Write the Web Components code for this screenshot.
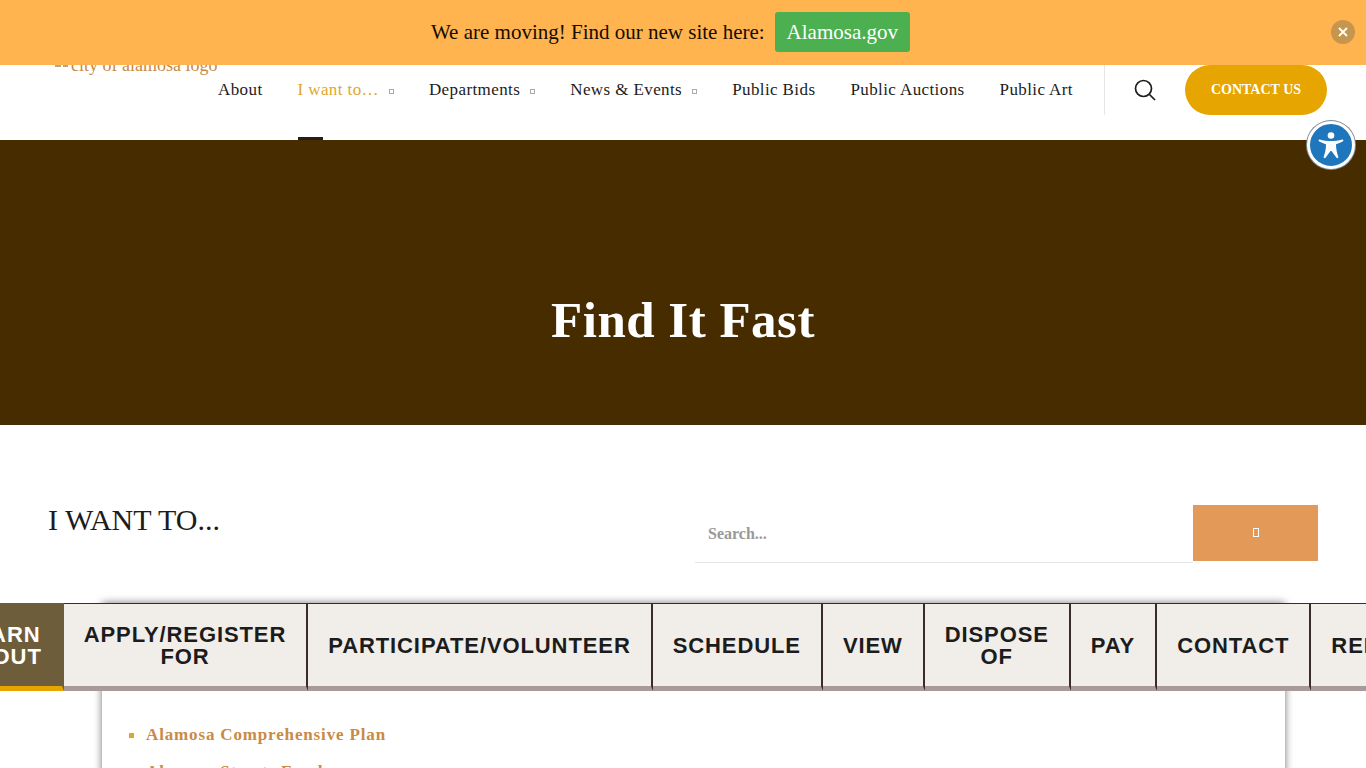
<!DOCTYPE html>
<html lang="en">
<head>
<meta charset="utf-8">
<title>Find It Fast</title>
<style>
  html, body { margin: 0; height: 768px; overflow: hidden; background: #fff; }
  body { font-family: "Liberation Serif", "Times New Roman", serif; color: #1c1c1c; position: relative; }
</style>
</head>
<body>
<site-banner></site-banner>
<site-header>
  <nav-link>About</nav-link>
  <nav-link active caret>I want to…</nav-link>
  <nav-link caret>Departments</nav-link>
  <nav-link caret>News &amp; Events</nav-link>
  <nav-link>Public Bids</nav-link>
  <nav-link>Public Auctions</nav-link>
  <nav-link>Public Art</nav-link>
</site-header>
<a11y-button></a11y-button>
<hero-band>Find It Fast</hero-band>
<want-section>
  <tab-item active>LEARN ABOUT</tab-item>
  <tab-item>APPLY/REGISTER FOR</tab-item>
  <tab-item>PARTICIPATE/VOLUNTEER</tab-item>
  <tab-item>SCHEDULE</tab-item>
  <tab-item>VIEW</tab-item>
  <tab-item>DISPOSE OF</tab-item>
  <tab-item>PAY</tab-item>
  <tab-item>CONTACT</tab-item>
  <tab-item>REPORT</tab-item>
  <li slot="links">Alamosa Comprehensive Plan</li>
  <li slot="links">Alamosa Streets Fund</li>
</want-section>

<script>
  class SiteBanner extends HTMLElement {
    constructor() {
      super();
      this.attachShadow({ mode: 'open' });
      this.shadowRoot.innerHTML = `
        <style>
          :host {
            position: absolute; top: 0; left: 0; right: 0; z-index: 5;
            display: flex; align-items: center; justify-content: center;
            gap: 10px; height: 65px; padding-right: 25px; box-sizing: border-box;
            background: #ffb44f; color: #140d00; font-size: 21px;
          }
          a {
            display: block; background: #4caf50; color: #fff; border-radius: 3px;
            padding: 0 12px; line-height: 40px; height: 40px; margin-top: -1px;
          }
          .close {
            position: absolute; right: 11px; top: 20px; width: 24px; height: 24px;
            border-radius: 50%; background: #c6964f;
            display: flex; align-items: center; justify-content: center;
          }
        </style>
        <span>We are moving! Find our new site here:</span>
        <a>Alamosa.gov</a>
        <div class="close">
          <svg width="12" height="12" viewBox="0 0 12 12"><path d="M2 2l8 8M10 2l-8 8" stroke="#fff" stroke-width="1.8" fill="none"/></svg>
        </div>
      `;
    }
  }

  class SiteHeader extends HTMLElement {
    constructor() {
      super();
      this.attachShadow({ mode: 'open' });
      this.shadowRoot.innerHTML = `
        <style>
          :host {
            display: flex; height: 140px; box-sizing: border-box;
            padding: 65px 39px 0 55px; background: #fff;
          }
          .logo {
            width: 163px; flex: none; font-size: 18px; line-height: 17px; margin-top: -8px;
            color: #c98a45; white-space: nowrap; display: flex; align-items: flex-start;
          }
          .logo i {
            display: block; width: 16px; height: 10px; flex: none;
            background: linear-gradient(to right, #b9a58a 6px, transparent 6px 8px, #b9a58a 8px 13px, transparent 13px) bottom / 100% 2px no-repeat;
          }
          nav { display: flex; height: 50px; align-items: center; min-width: 0; }
          .tools { display: flex; align-items: flex-start; flex: none; margin-left: auto; }
          .search {
            width: 81px; height: 50px; border-left: 1px solid #e6e6e6; box-sizing: border-box;
            display: flex; align-items: center; justify-content: center;
          }
          .cta {
            width: 142px; height: 50px; border-radius: 25px; background: #e6a500; color: #fff;
            font-weight: 700; font-size: 14px; display: flex; align-items: center; justify-content: center;
          }
        </style>
        <div class="logo"><i></i>city of alamosa logo</div>
        <nav><slot></slot></nav>
        <div class="tools">
          <div class="search">
            <svg width="24" height="24" viewBox="0 0 24 24" fill="none" stroke="#1c1c1c" stroke-width="1.7"><circle cx="10.500" cy="10.500" r="8"/><path d="M16.500 16.500l5.500 5.500"/></svg>
          </div>
          <div class="cta">CONTACT US</div>
        </div>
      `;
    }
  }

  class NavLink extends HTMLElement {
    constructor() {
      super();
      this.attachShadow({ mode: 'open' });
    }
    connectedCallback() {
      const active = this.hasAttribute('active');
      const caret = this.hasAttribute('caret');
      this.shadowRoot.innerHTML = `
        <style>
          :host {
            display: flex; align-items: center; position: relative; height: 50px; flex: none;
            font-size: 17px; letter-spacing: 0.4px; white-space: nowrap;
            margin-right: 35px; color: ${active ? '#dfa62c' : '#1c1c1c'};
          }
          .caret {
            display: block; width: 5px; height: 5px; margin: 2px 0 0 10px; box-sizing: border-box;
            border: 1px solid ${active ? '#dfa62c' : '#aaa'};
          }
          .mark {
            position: absolute; left: 0; top: 72px; width: 25px; height: 3px; background: #2b1c10;
          }
        </style>
        <slot></slot>
        ${caret ? '<span class="caret"></span>' : ''}
        ${active ? '<span class="mark"></span>' : ''}
      `;
    }
  }

  class HeroBand extends HTMLElement {
    constructor() {
      super();
      this.attachShadow({ mode: 'open' });
      this.shadowRoot.innerHTML = `
        <style>
          :host {
            display: flex; align-items: center; justify-content: center;
            height: 285px; padding-top: 74px; box-sizing: border-box;
            background: #472c00; color: #fff;
            font-size: 51px; font-weight: 700; letter-spacing: 0.5px;
          }
        </style>
        <slot></slot>
      `;
    }
  }

  class A11yButton extends HTMLElement {
    constructor() {
      super();
      this.attachShadow({ mode: 'open' });
      this.shadowRoot.innerHTML = `
        <style>
          :host {
            position: absolute; left: 1307px; top: 121px; z-index: 6; display: block;
            width: 48px; height: 48px; border-radius: 50%; background: #1e76bc; box-sizing: border-box;
            border: 3px solid #fff; box-shadow: 0 0 0 1px #7c8a96;
          }
          svg { display: block; width: 42px; height: 42px; }
        </style>
        <svg viewBox="0 0 42 42" fill="#fff">
          <circle cx="21" cy="11.500" r="3.300"/>
          <path d="M9 17.200C8.200 16.600 8.700 15.200 9.700 15.500 13.500 16.500 17 17 21 17 25 17 28.500 16.500 32.300 15.500 33.300 15.200 33.800 16.600 33 17.200 30.500 18.600 28 19.600 26 20.200 26 25 27 29 28.300 32.800 28.700 34 27.200 34.800 26.500 33.800L21.500 27H20.500L15.500 33.800C14.800 34.800 13.300 34 13.700 32.800 15 29 16 25 16 20.200 14 19.600 11.500 18.600 9 17.200z"/>
        </svg>
      `;
    }
  }

  class TabItem extends HTMLElement {
    constructor() {
      super();
      this.attachShadow({ mode: 'open' });
    }
    connectedCallback() {
      const active = this.hasAttribute('active');
      this.shadowRoot.innerHTML = `
        <style>
          :host {
            display: flex; align-items: center; justify-content: center; flex: none;
            box-sizing: content-box; width: min-content; height: 81px; padding: 1px 20px 0; text-align: center;
            border-top: 1px solid ${active ? '#6d5d3a' : '#3a2c28'};
            border-right: 2px solid ${active ? '#6d5d3a' : '#3a2c28'};
            border-bottom: 5px solid ${active ? '#e6a500' : '#a89a9a'};
            background: ${active ? '#6d5d3a' : '#f1ede8'};
            color: ${active ? '#fff' : '#1c1c1c'};
            font: 700 22px/22px "Liberation Sans", Arial, sans-serif; letter-spacing: 0.9px;
          }
        </style>
        <slot></slot>
      `;
    }
  }

  class WantSection extends HTMLElement {
    constructor() {
      super();
      this.attachShadow({ mode: 'open' });
      this.shadowRoot.innerHTML = `
        <style>
          :host { display: block; padding-top: 80px; }
          .top {
            display: flex; justify-content: space-between; align-items: flex-start;
            padding: 0 48px; height: 98px;
          }
          h2 { margin: 0; font-size: 30px; font-weight: 400; line-height: 30px; color: #1c1c1c; }
          .search { display: flex; width: 623px; height: 58px; }
          .field {
            flex: 1; height: 58px; box-sizing: border-box; border-bottom: 1px solid #e6e6e6;
            padding: 20px 0 0 13px; color: #999; font-size: 16px; font-weight: 700; line-height: 18px;
          }
          .go {
            width: 125px; height: 56px; background: #e39a58;
            display: flex; align-items: center; justify-content: center;
          }
          .go span { display: block; width: 6px; height: 9px; border: 1px solid #fff; box-sizing: border-box; margin-top: -2px; }
          .panel { position: relative; height: 165px; }
          .card {
            margin: 0 81px 0 102px; height: 300px; background: #fff;
            box-shadow: 0 0 8px rgba(0,0,0,.55); padding-top: 88px;
          }
          .tabs { position: absolute; top: 0; left: 0; right: 0; display: flex; overflow: hidden; }
          ::slotted(tab-item:first-child) { margin-left: -61px; }
          ul {
            margin: 0; padding: 29px 0 0 27px; list-style: none; color: #c98a45;
            font-size: 17px; font-weight: 700; letter-spacing: 0.85px; line-height: 30px;
          }
          ::slotted(li) { display: flex; align-items: center; gap: 12px; margin-bottom: 7px; }
          ::slotted(li)::before { content: ""; flex: none; width: 5px; height: 5px; background: #dfa62c; }
        </style>
        <div class="top">
          <h2>I WANT TO...</h2>
          <div class="search">
            <div class="field">Search...</div>
            <div class="go"><span></span></div>
          </div>
        </div>
        <div class="panel">
          <div class="card"><ul><slot name="links"></slot></ul></div>
          <div class="tabs"><slot></slot></div>
        </div>
      `;
    }
  }

  customElements.define('site-banner', SiteBanner);
  customElements.define('site-header', SiteHeader);
  customElements.define('nav-link', NavLink);
  customElements.define('hero-band', HeroBand);
  customElements.define('a11y-button', A11yButton);
  customElements.define('tab-item', TabItem);
  customElements.define('want-section', WantSection);
</script>
</body>
</html>
